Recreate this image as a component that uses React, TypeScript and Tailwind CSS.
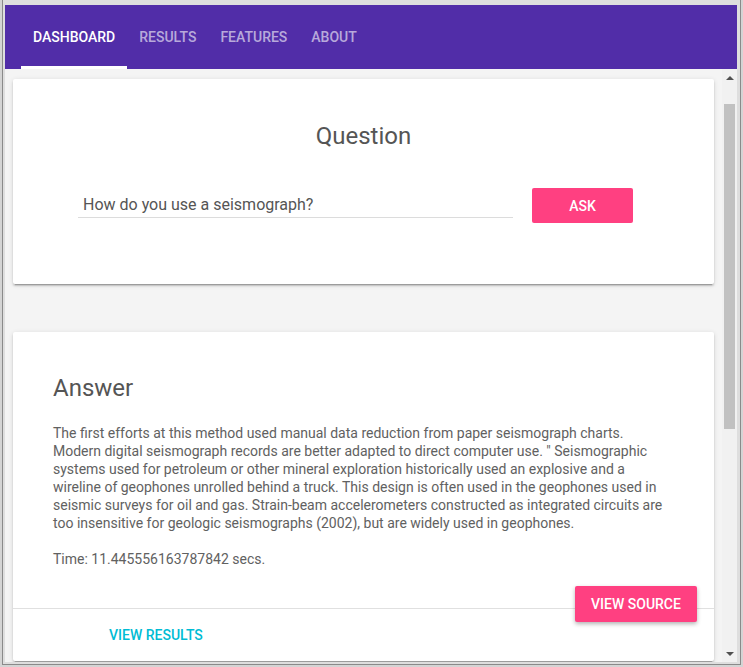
export default function App() {
  const cardShadow =
    "shadow-[0_2px_2px_0_rgba(0,0,0,0.14),0_3px_1px_-2px_rgba(0,0,0,0.2),0_1px_5px_0_rgba(0,0,0,0.12)]";

  return (
    <div className="w-[743px] h-[667px] bg-[#d4d4d4] pl-[2px] pr-[2px] pb-[2px] font-['Roboto',sans-serif]">
      <div className="h-full border-l border-r border-b border-[#8a8a8a] bg-[#dedede] pl-[2px] pr-[3px] pb-[2px] pt-[5px]">
        <div className="w-full h-full flex flex-col overflow-hidden">
          {/* Top nav */}
          <header className="h-[64px] shrink-0 bg-[#512da8] flex items-stretch pl-[16px]">
            <nav className="flex">
              <a className="relative flex items-center px-3 text-[14px] font-medium text-white">
                DASHBOARD
                <span className="absolute left-0 right-0 bottom-0 h-[3px] bg-white" />
              </a>
              <a className="flex items-center px-3 text-[14px] font-medium text-white/60">
                RESULTS
              </a>
              <a className="flex items-center px-3 text-[14px] font-medium text-white/60">
                FEATURES
              </a>
              <a className="flex items-center px-3 text-[14px] font-medium text-white/60">
                ABOUT
              </a>
            </nav>
          </header>

          <div className="flex-1 flex min-h-0">
            {/* Page body */}
            <main className="flex-1 bg-[#f4f4f4] overflow-hidden pt-[10px] px-2">
              {/* Question card */}
              <section className={`bg-white rounded-[2px] ${cardShadow} pt-[41px] pb-[61px]`}>
                <h2 className="text-center text-[24px] leading-[32px] text-[#555]">Question</h2>
                <div className="flex items-start mt-[36px] pl-[65px]">
                  <input
                    type="text"
                    defaultValue="How do you use a seismograph?"
                    className="w-[435px] h-[30px] pl-[5px] pt-[4px] text-[16px] text-[#555] border-b border-[#dcdcdc] outline-none bg-transparent"
                  />
                  <button className="ml-[19px] w-[101px] h-[35px] pt-[1px] rounded-[2px] bg-[#ff4081] text-white text-[14px] font-medium">
                    ASK
                  </button>
                </div>
              </section>

              {/* Answer card */}
              <section className={`mt-[48px] bg-white rounded-[2px] ${cardShadow}`}>
                <div className="p-10">
                  <h2 className="text-[24px] leading-[32px] text-[#555]">Answer</h2>
                  <p className="mt-5 text-[14px] leading-[18px] text-[#616161] whitespace-nowrap">
                    The first efforts at this method used manual data reduction from paper seismograph charts.
                    <br />
                    Modern digital seismograph records are better adapted to direct computer use. " Seismographic
                    <br />
                    systems used for petroleum or other mineral exploration historically used an explosive and a
                    <br />
                    wireline of geophones unrolled behind a truck. This design is often used in the geophones used in
                    <br />
                    seismic surveys for oil and gas. Strain-beam accelerometers constructed as integrated circuits are
                    <br />
                    too insensitive for geologic seismographs (2002), but are widely used in geophones.
                  </p>
                  <p className="mt-[18px] text-[14px] leading-[18px] text-[#616161]">
                    Time: 11.445556163787842 secs.
                  </p>
                </div>
                <div className="relative border-t border-[#e0e0e0] py-2 pl-[80px]">
                  <button className="h-[36px] px-4 text-[14px] font-medium text-[#00bcd4]">
                    VIEW RESULTS
                  </button>
                  <button className="absolute right-[17px] -top-[23px] w-[122px] h-[36px] rounded-[2px] bg-[#ff4081] text-white text-[14px] font-medium shadow-[0_2px_4px_rgba(0,0,0,0.3)]">
                    VIEW SOURCE
                  </button>
                </div>
              </section>
            </main>

            {/* Scrollbar */}
            <div className="w-[15px] shrink-0 bg-[#f1f1f1] flex flex-col items-center">
              <div className="h-[17px] flex items-center justify-center">
                <div className="w-0 h-0 border-l-[4px] border-r-[4px] border-b-[4px] border-l-transparent border-r-transparent border-b-[#505050]" />
              </div>
              <div className="mt-[18px] w-[11px] h-[325px] bg-[#c1c1c1]" />
              <div className="flex-1" />
              <div className="h-[17px] flex items-center justify-center">
                <div className="w-0 h-0 border-l-[4px] border-r-[4px] border-t-[4px] border-l-transparent border-r-transparent border-t-[#505050]" />
              </div>
            </div>
          </div>
        </div>
      </div>
    </div>
  );
}
